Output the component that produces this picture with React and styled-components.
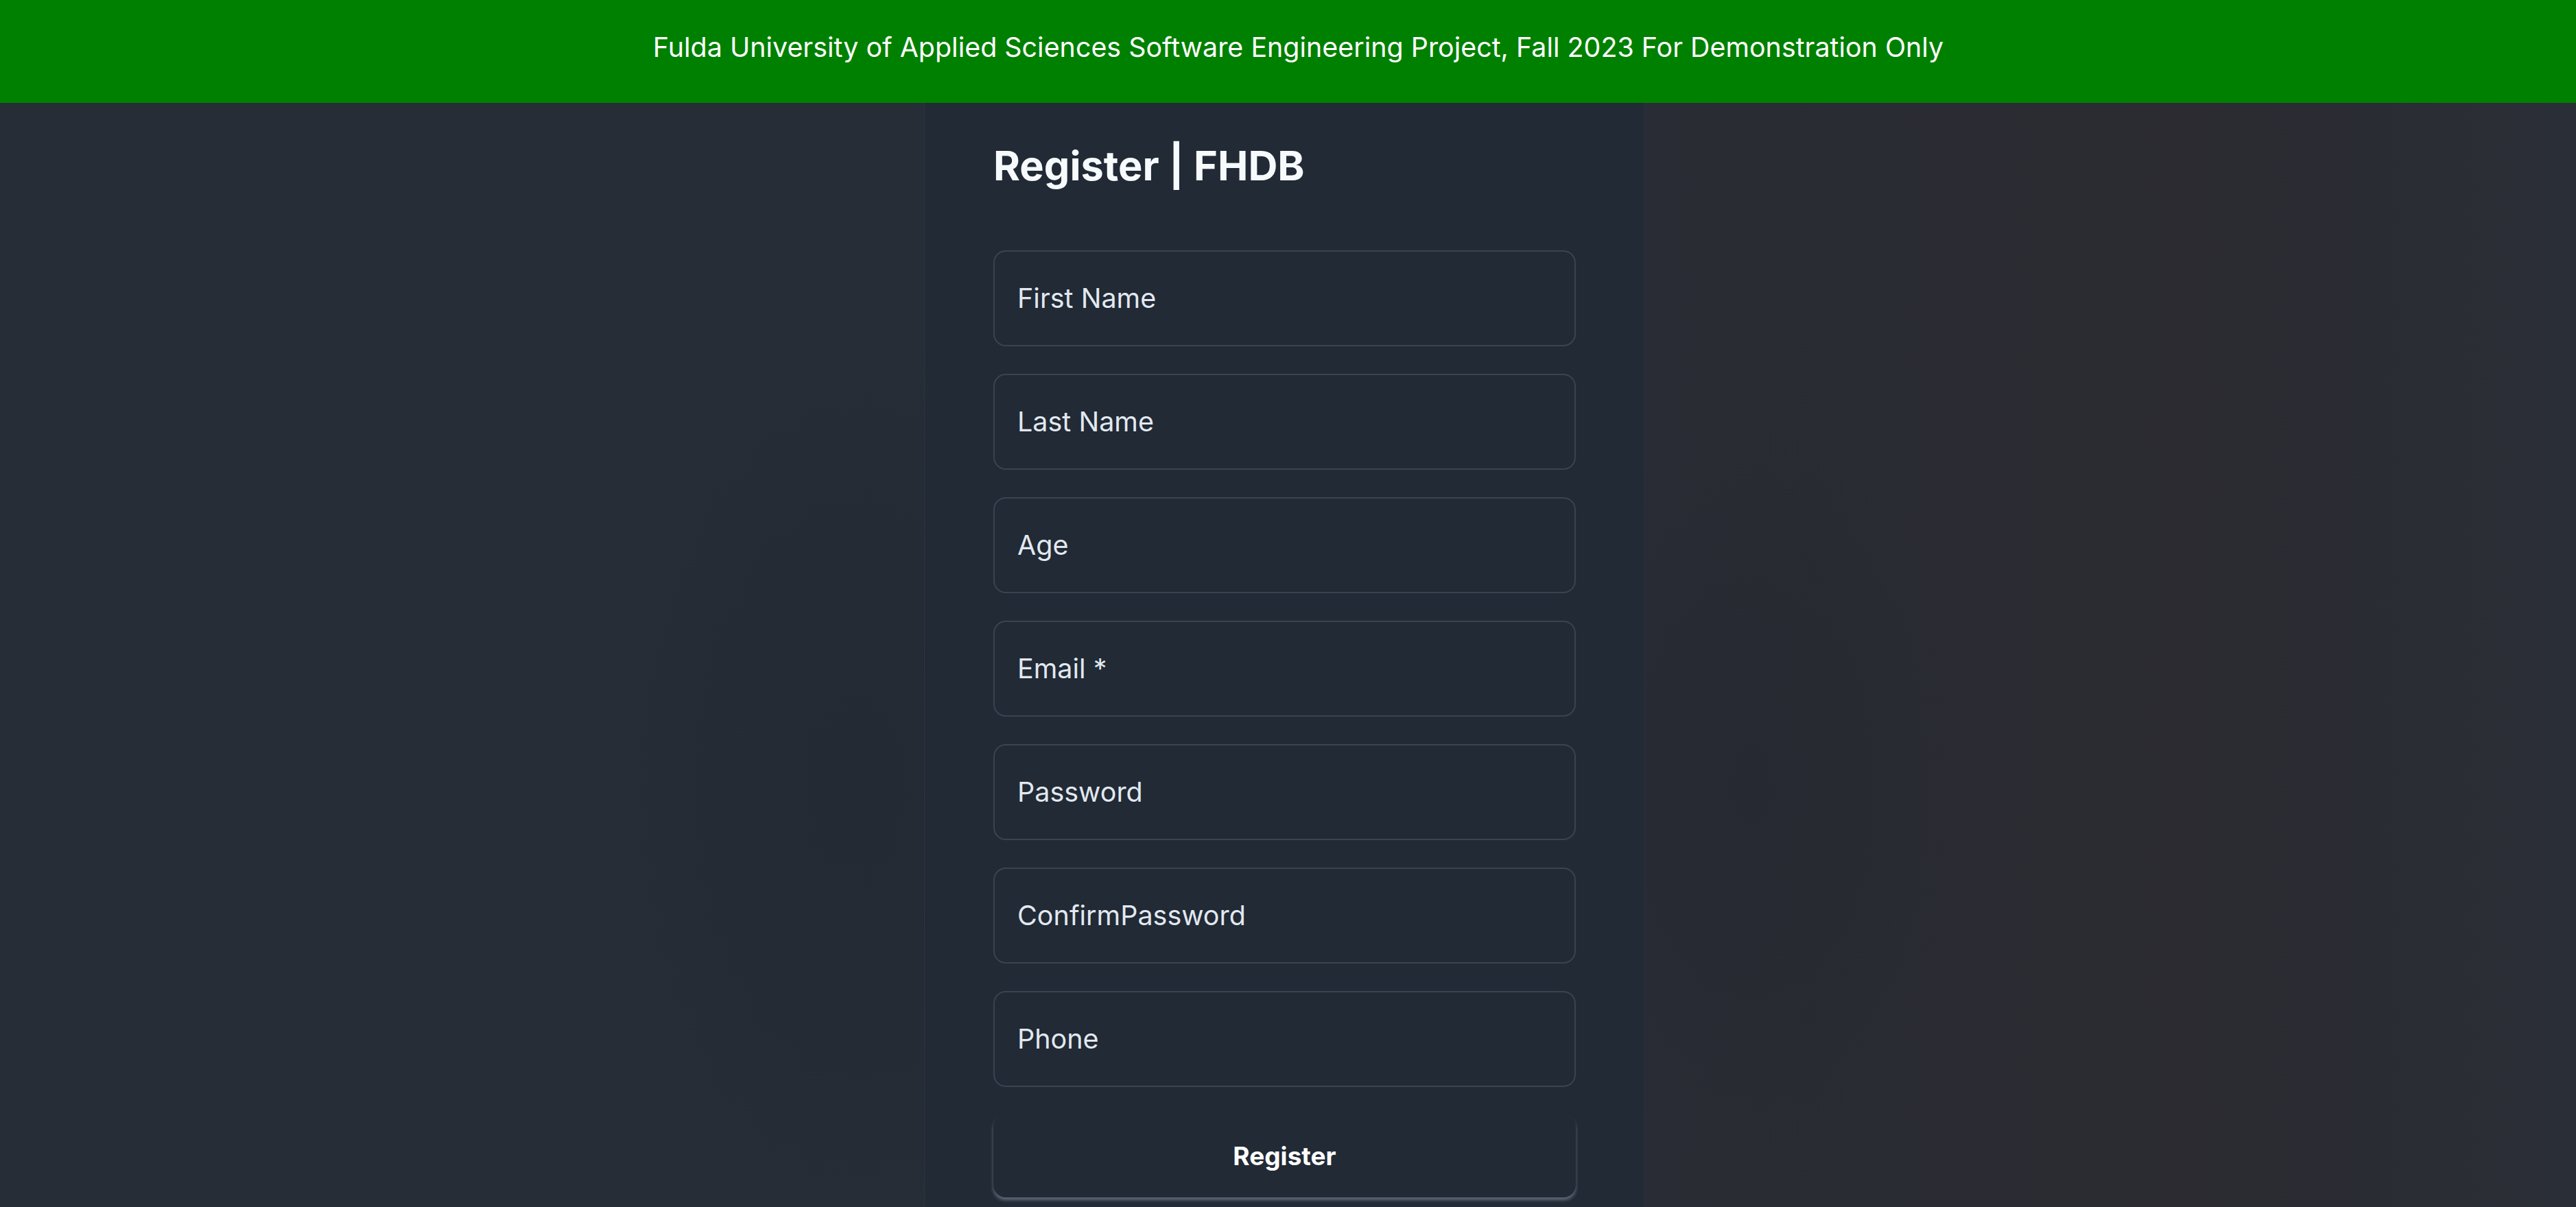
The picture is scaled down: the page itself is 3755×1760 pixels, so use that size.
import React from "react";
import styled, { createGlobalStyle } from "styled-components";

const GlobalStyle = createGlobalStyle`
  html, body {
    margin: 0;
    padding: 0;
    background: #262c35;
  }
  * {
    box-sizing: border-box;
  }
`;

const fields = [
  "First Name",
  "Last Name",
  "Age",
  "Email *",
  "Password",
  "ConfirmPassword",
  "Phone",
];

const Page = styled.div`
  min-height: 1760px;
  display: flex;
  flex-direction: column;
  font-family: Inter, "Noto Sans", sans-serif;
`;

const Banner = styled.div`
  height: 150px;
  flex-shrink: 0;
  background: #008000;
  color: #ffffff;
  display: flex;
  align-items: center;
  justify-content: center;
  padding: 0 0 12px 30px;
  font-size: 39.4px;
`;

const Backdrop = styled.div`
  flex: 1;
  display: grid;
  grid-template-columns: 1347px 1051px 1fr;
  background:
    radial-gradient(ellipse 500px 900px at 1250px 1000px, rgba(30, 38, 48, 0.45), transparent 80%),
    radial-gradient(ellipse 400px 700px at 2550px 1000px, rgba(34, 37, 47, 0.4), transparent 80%),
    linear-gradient(90deg, #262d36 0%, #262d36 36%, #292c34 64%, #2b2b31 85%, #2a2e36 100%);
`;

const Side = styled.div``;

const Panel = styled.div`
  background: #212a35;
  border-left: 1px solid #2d3540;
  border-right: 1px solid #2a313b;
  padding: 57px 100px 0;
  display: flex;
  flex-direction: column;
`;

const Heading = styled.h1`
  margin: 0 0 88px;
  font-size: 59.5px;
  line-height: 1.17;
  font-weight: 700;
  color: #f7fafc;
`;

const Form = styled.form`
  display: flex;
  flex-direction: column;
  gap: 40px;
`;

const Field = styled.div`
  height: 140px;
  border: 2px solid #3a4350;
  border-radius: 18px;
  display: flex;
  align-items: center;
  padding: 0 33px;
  font-size: 39.5px;
  color: #e2e8f0;
`;

const Button = styled.button`
  height: 121px;
  border: none;
  border-radius: 18px;
  background: #212a35;
  color: #ffffff;
  font-family: inherit;
  font-size: 37px;
  font-weight: 700;
  box-shadow: 0 4px 5px rgba(170, 182, 200, 0.45);
`;

export default function App() {
  return (
    <Page>
      <GlobalStyle />
      <Banner>
        Fulda University of Applied Sciences Software Engineering Project, Fall 2023 For Demonstration Only
      </Banner>
      <Backdrop>
        <Side />
        <Panel>
          <Heading>Register | FHDB</Heading>
          <Form onSubmit={(e) => e.preventDefault()}>
            {fields.map((f) => (
              <Field key={f}>{f}</Field>
            ))}
            <Button type="submit">Register</Button>
          </Form>
        </Panel>
        <Side />
      </Backdrop>
    </Page>
  );
}
